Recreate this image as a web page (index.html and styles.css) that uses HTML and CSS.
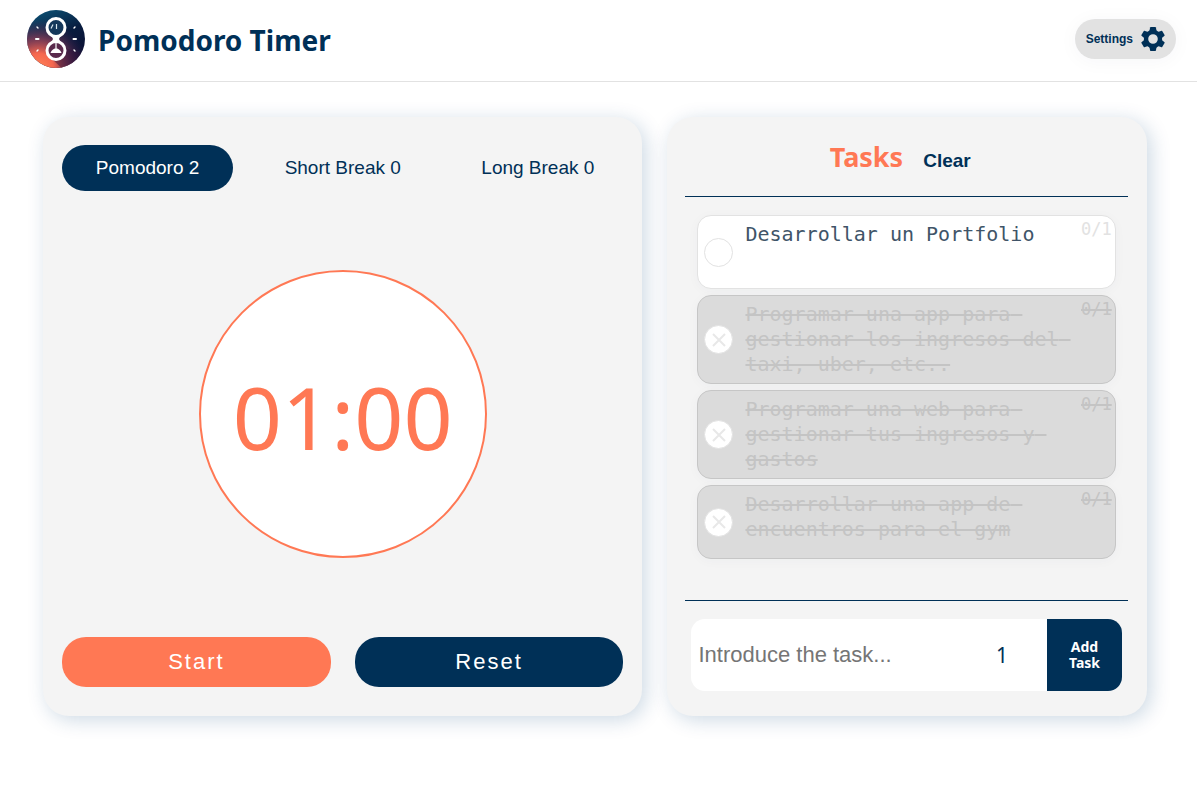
FILE: index.html
```html
<!DOCTYPE html>
<html lang="en">
<head>
<meta charset="utf-8">
<meta name="viewport" content="width=device-width, initial-scale=1">
<title>Pomodoro Timer</title>
<link rel="stylesheet" href="styles.css">
</head>
<body>
<header class="topbar">
  <div class="brand">
    <svg class="logo" viewBox="0 0 58 58" aria-hidden="true">
      <defs>
        <linearGradient id="night" x1="0.3" y1="0" x2="0.7" y2="1">
          <stop offset="0" stop-color="#0b4d70"/>
          <stop offset="0.45" stop-color="#081c3f"/>
          <stop offset="1" stop-color="#0d0c30"/>
        </linearGradient>
        <radialGradient id="glow" cx="0.2" cy="1" r="0.85">
          <stop offset="0" stop-color="#ff8256"/>
          <stop offset="0.3" stop-color="#f5674f"/>
          <stop offset="0.6" stop-color="#93405a" stop-opacity="0.75"/>
          <stop offset="1" stop-color="#3a2350" stop-opacity="0"/>
        </radialGradient>
      </defs>
      <circle cx="29" cy="29" r="29" fill="url(#night)"/>
      <circle cx="29" cy="29" r="29" fill="url(#glow)"/>
      <path d="M24 48 L34 57.500 Q48 54 54 43 L38 38z" fill="#2a1038" opacity="0.45"/>
      <g fill="#14375a" stroke="#fff" stroke-width="3">
        <circle cx="29" cy="17.500" r="9"/>
        <circle cx="29" cy="40.500" r="9" fill="#5a2a4c"/>
      </g>
      <path d="M24 25h10l-2 4 2 4H24l2-4z" fill="#fff"/>
      <path d="M29 33v5" stroke="#fff" stroke-width="1.200"/>
      <path d="M23.500 43c1-3 3-4 5.500-5c2.500 1 4.500 2 5.500 5z" fill="#fff"/>
      <path d="M24 18.500l2-4M29.500 14v5" stroke="#d9e6ee" stroke-width="1.200"/>
      <g stroke="#fff" stroke-width="2" stroke-linecap="round">
        <path d="M9 29h2.500M46.500 29H49"/>
        <path d="M10 17l1 1M47 18l1-1M10 41l1-1M47 40l1 1" stroke-width="1.400"/>
      </g>
    </svg>
    <h1 class="brand-name">Pomodoro Timer</h1>
  </div>
  <button class="settings" type="button">
    Settings
    <svg class="gear" viewBox="0 0 24 24" aria-hidden="true">
      <circle cx="12" cy="12" r="7" fill="none" stroke="currentColor" stroke-width="4.400"/>
      <g fill="currentColor">
        <path id="tooth" d="M8.200 5l.9-4.600q.1-.4.500-.4h4.800q.4 0 .5.400L15.800 5z"/>
        <use href="#tooth" transform="rotate(60 12 12)"/>
        <use href="#tooth" transform="rotate(120 12 12)"/>
        <use href="#tooth" transform="rotate(180 12 12)"/>
        <use href="#tooth" transform="rotate(240 12 12)"/>
        <use href="#tooth" transform="rotate(300 12 12)"/>
      </g>
    </svg>
  </button>
</header>

<main class="board">
  <section class="panel timer" aria-label="Timer">
    <div class="modes">
      <button class="mode mode-active" type="button">Pomodoro 2</button>
      <button class="mode" type="button">Short Break 0</button>
      <button class="mode" type="button">Long Break 0</button>
    </div>
    <div class="dial"><span class="time">01:00</span></div>
    <div class="actions">
      <button class="action action-start" type="button">Start</button>
      <button class="action action-reset" type="button">Reset</button>
    </div>
  </section>

  <section class="panel tasks" aria-labelledby="tasks-title">
    <div class="tasks-head">
      <h2 class="tasks-title" id="tasks-title">Tasks</h2>
      <button class="clear" type="button">Clear</button>
    </div>
    <ul class="task-list">
      <li class="task">
        <button class="check" type="button" aria-label="Complete task"></button>
        <p class="task-text">Desarrollar un Portfolio</p>
        <span class="count">0/1</span>
      </li>
      <li class="task task-done">
        <button class="check" type="button" aria-label="Restore task"><svg class="cross" viewBox="0 0 14 14" aria-hidden="true"><path d="M1 1l12 12M13 1L1 13"/></svg></button>
        <p class="task-text">Programar una app para gestionar los ingresos del taxi, uber, etc..</p>
        <span class="count">0/1</span>
      </li>
      <li class="task task-done">
        <button class="check" type="button" aria-label="Restore task"><svg class="cross" viewBox="0 0 14 14" aria-hidden="true"><path d="M1 1l12 12M13 1L1 13"/></svg></button>
        <p class="task-text">Programar una web para gestionar tus ingresos y gastos</p>
        <span class="count">0/1</span>
      </li>
      <li class="task task-done">
        <button class="check" type="button" aria-label="Restore task"><svg class="cross" viewBox="0 0 14 14" aria-hidden="true"><path d="M1 1l12 12M13 1L1 13"/></svg></button>
        <p class="task-text">Desarrollar una app de encuentros para el gym</p>
        <span class="count">0/1</span>
      </li>
    </ul>
    <form class="add">
      <input class="add-text" type="text" placeholder="Introduce the task..." aria-label="Task">
      <input class="add-count" type="number" value="1" min="1" aria-label="Pomodoros">
      <button class="add-button" type="button">Add Task</button>
    </form>
  </section>
</main>
</body>
</html>
```
FILE: styles.css
```css
:root {
  --navy: #003057;
  --coral: #ff7854;
  --panel: #f4f4f4;
  --sans: "Liberation Sans", Arial, sans-serif;
  --humanist: "Noto Sans", "Open Sans", sans-serif;
  --mono: "DejaVu Sans Mono", monospace;
}

* {
  box-sizing: border-box;
}

body {
  margin: 0;
  background: #fff;
  color: var(--navy);
  font-family: var(--sans);
}

button,
input {
  margin: 0;
  border: 0;
  font-family: inherit;
  color: inherit;
}

button {
  cursor: pointer;
}

.topbar {
  display: flex;
  align-items: center;
  justify-content: space-between;
  padding: 10px 21px 13px 27px;
  border-bottom: 1px solid #e2e2e2;
}

.brand {
  display: flex;
  align-items: center;
  gap: 13px;
}

.logo {
  width: 58px;
  height: 58px;
}

.brand-name {
  margin: 0;
  padding-top: 2px;
  font: 700 28px/40px var(--humanist);
}

.settings {
  display: flex;
  align-items: center;
  gap: 8px;
  height: 40px;
  padding: 0 11px;
  border-radius: 20px;
  background: #e2e2e2;
  box-shadow: 0 2px 20px rgba(0, 48, 87, 0.04);
  font-size: 12px;
  font-weight: 700;
}

.gear {
  width: 24px;
  height: 24px;
}

.board {
  display: grid;
  grid-template-columns: minmax(0, 5fr) minmax(0, 4fr);
  gap: 25px;
  padding: 35px 50px 70px 43px;
}

.panel {
  display: flex;
  flex-direction: column;
  min-height: 599px;
  border-radius: 26px;
  background: var(--panel);
  box-shadow: 4px 4px 20px rgba(0, 64, 120, 0.2);
}

.timer {
  justify-content: space-between;
  padding: 28px 19px 29px;
}

.modes {
  display: grid;
  grid-template-columns: repeat(3, 1fr);
  gap: 24px;
}

.mode {
  height: 46px;
  padding: 0;
  border-radius: 23px;
  background: transparent;
  font-size: 19px;
}

.mode-active {
  background: var(--navy);
  color: #fff;
}

.dial {
  display: grid;
  place-items: center;
  align-self: center;
  width: 288px;
  aspect-ratio: 1;
  padding-top: 6px;
  border: 2px solid var(--coral);
  border-radius: 50%;
  background: #fff;
  color: var(--coral);
}

.time {
  font: 400 86px/120px var(--humanist);
}

.actions {
  display: grid;
  grid-template-columns: 1fr 1fr;
  gap: 24px;
}

.action {
  height: 50px;
  border-radius: 24px;
  color: #fff;
  font-size: 22px;
  letter-spacing: 2px;
}

.action-start {
  background: var(--coral);
}

.action-reset {
  background: var(--navy);
}

.tasks {
  padding: 18px 19px 25px 18px;
}

.tasks-head {
  display: flex;
  align-items: baseline;
  justify-content: center;
  gap: 20px;
  padding: 2px 13px 19px 0;
  border-bottom: 1px solid var(--navy);
}

.tasks-title {
  margin: 0;
  color: var(--coral);
  font: 700 27px/40px var(--humanist);
}

.clear {
  padding: 0;
  background: transparent;
  font-size: 19px;
  font-weight: 700;
}

.task-list {
  display: flex;
  flex: 1;
  flex-direction: column;
  gap: 6px;
  margin: 0 0 18px;
  padding: 18px 12px;
  border-bottom: 1px solid var(--navy);
  list-style: none;
}

.task {
  display: grid;
  grid-template-columns: 29px 1fr 31px;
  gap: 12px;
  min-height: 74px;
  padding: 6px 3px 6px 6px;
  border: 1px solid #e2e2e2;
  border-radius: 14px;
  background: #fff;
  box-shadow: 0 2px 12px rgba(0, 48, 87, 0.03);
}

.task-done {
  border-color: #c6c6c6;
  background: #dbdbdb;
}

.check {
  display: grid;
  place-items: center;
  align-self: center;
  width: 29px;
  height: 29px;
  padding: 0;
  border: 1px solid #e2e2e2;
  border-radius: 50%;
  background: #fff;
}

.cross {
  width: 14px;
  height: 14px;
  fill: none;
  stroke: #e8e8e8;
  stroke-width: 2;
}

.task-text {
  margin: 0;
  color: #405468;
  font: 400 20px/25px var(--mono);
  white-space: pre-wrap;
}

.count {
  color: #e2e2e2;
  font: 400 17px/14px var(--mono);
}

.task-done .task-text,
.task-done .count {
  color: #c4c4c4;
  text-decoration: line-through 2px;
}

.add {
  display: flex;
  min-height: 72px;
  margin: 0 6px;
  overflow: hidden;
  border-radius: 14px;
}

.add-text {
  flex: 1;
  min-width: 0;
  padding: 0 7px;
  background: #fff;
  font-size: 22px;
}

.add-text::placeholder {
  color: #757575;
}

.add-count {
  width: 90px;
  padding: 0;
  background: #fff;
  font: 400 21px/28px var(--humanist);
  text-align: center;
  appearance: textfield;
}

.add-count::-webkit-inner-spin-button {
  margin: 0;
  appearance: none;
}

.add-button {
  width: 75px;
  padding: 0 16px;
  background: var(--navy);
  color: #fff;
  font: 700 14px/16px var(--humanist);
}
```
